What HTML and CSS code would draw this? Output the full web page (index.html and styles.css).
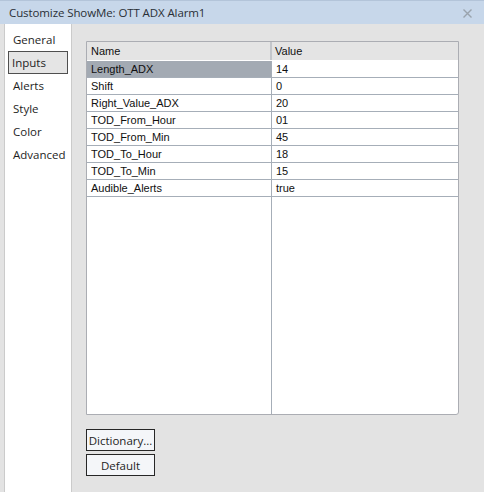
FILE: index.html
```html
<!DOCTYPE html>
<html>
<head>
<meta charset="utf-8">
<link rel="stylesheet" href="styles.css">
</head>
<body>
<div class="window">
  <div class="titlebar">
    <span class="title">Customize ShowMe: OTT ADX Alarm1</span>
    <svg class="close" width="9" height="9" viewBox="0 0 9 9"><path d="M0.5 0.5 L8.5 8.5 M8.5 0.5 L0.5 8.5" stroke="#9aa3ad" stroke-width="1.4" fill="none"/></svg>
  </div>
  <div class="body">
    <nav class="sidebar">
      <div class="nav-item">General</div>
      <div class="nav-item selected">Inputs</div>
      <div class="nav-item">Alerts</div>
      <div class="nav-item">Style</div>
      <div class="nav-item">Color</div>
      <div class="nav-item">Advanced</div>
    </nav>
    <section class="content">
      <div class="grid">
        <div class="row header">
          <div class="cell name">Name</div>
          <div class="cell value">Value</div>
        </div>
        <div class="row">
          <div class="cell name active">Length_ADX</div>
          <div class="cell value">14</div>
        </div>
        <div class="row">
          <div class="cell name">Shift</div>
          <div class="cell value">0</div>
        </div>
        <div class="row">
          <div class="cell name">Right_Value_ADX</div>
          <div class="cell value">20</div>
        </div>
        <div class="row">
          <div class="cell name">TOD_From_Hour</div>
          <div class="cell value">01</div>
        </div>
        <div class="row">
          <div class="cell name">TOD_From_Min</div>
          <div class="cell value">45</div>
        </div>
        <div class="row">
          <div class="cell name">TOD_To_Hour</div>
          <div class="cell value">18</div>
        </div>
        <div class="row">
          <div class="cell name">TOD_To_Min</div>
          <div class="cell value">15</div>
        </div>
        <div class="row">
          <div class="cell name">Audible_Alerts</div>
          <div class="cell value">true</div>
        </div>
        <div class="row filler">
          <div class="cell name"></div>
          <div class="cell value"></div>
        </div>
      </div>
      <div class="buttons">
        <button class="btn">Dictionary...</button>
        <button class="btn">Default</button>
      </div>
    </section>
  </div>
</div>
</body>
</html>
```
FILE: styles.css
```css
html, body {
  margin: 0;
  padding: 0;
}
body {
  width: 484px;
  height: 492px;
  overflow: hidden;
  background: #e3e3e3;
  font-family: "Open Sans", "Noto Sans", sans-serif;
  font-size: 11.5px;
  color: #1e1e1e;
}
.window {
  display: flex;
  flex-direction: column;
  height: 492px;
}
.titlebar {
  height: 23px;
  border-top: 1px solid #b3c4d9;
  background: #c7d7ea;
  display: flex;
  align-items: center;
  justify-content: space-between;
  padding: 0 12px 0 9px;
}
.title {
  color: #2a2f36;
  font-size: 11.5px;
  letter-spacing: -0.1px;
}
.close {
  margin-top: 2px;
}
.body {
  flex: 1;
  display: flex;
}
.sidebar {
  margin-left: 4px;
  width: 66px;
  background: #ffffff;
  border-left: 1px solid #cbcbcb;
  border-right: 1px solid #cbcbcb;
  padding-top: 4px;
  display: flex;
  flex-direction: column;
}
.nav-item {
  height: 23px;
  line-height: 21px;
  margin: 0 3px 0 3px;
  padding-left: 4px;
  border: 1px solid transparent;
  box-sizing: border-box;
  color: #1e1e1e;
}
.nav-item.selected {
  background: #e5e5e5;
  border-color: #4f4f4f;
  padding-left: 3px;
}
.content {
  flex: 1;
  padding: 17px 0 0 14px;
  display: flex;
  flex-direction: column;
}
.grid {
  width: 371px;
  height: 372px;
  border: 1px solid #abadb3;
  border-bottom-right-radius: 3px;
  background: #ffffff;
  display: flex;
  flex-direction: column;
  font-family: "Liberation Sans", Arial, sans-serif;
  font-size: 11px;
  color: #101010;
}
.row {
  display: flex;
  height: 17px;
  box-sizing: border-box;
  border-bottom: 1px solid #a6aeb8;
}
.row.header {
  height: 19px;
  background: #e4e4e4;
  border-bottom: 1px solid #ffffff;
}
.row.filler {
  flex: 1;
  border-bottom: none;
}
.cell {
  box-sizing: border-box;
  padding-left: 4px;
  line-height: 16px;
  white-space: nowrap;
}
.cell.name {
  width: 185px;
  border-right: 1px solid #a6aeb8;
}
.cell.value {
  flex: 1;
}
.header .cell {
  line-height: 19px;
}
.header .cell.name {
  border-right: 2px solid #c3c6cb;
}
.header .cell.value {
  padding-left: 3px;
}
.cell.active {
  background: #a3aab3;
}
.buttons {
  margin-top: 14px;
  display: flex;
  flex-direction: column;
  gap: 3px;
}
.btn {
  width: 69px;
  height: 22px;
  padding: 0;
  border: 1px solid #262626;
  border-radius: 0;
  background: #f4f6f9;
  font-family: "Open Sans", "Noto Sans", sans-serif;
  font-size: 11.5px;
  color: #1e1e1e;
}
```
